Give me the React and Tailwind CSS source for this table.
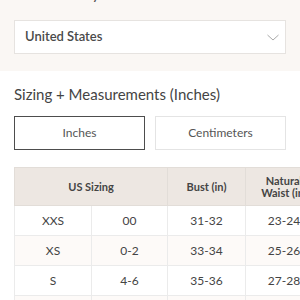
const rows = [
  ['XXS', '00', '31-32', '23-24'],
  ['XS', '0-2', '33-34', '25-26'],
  ['S', '4-6', '35-36', '27-28'],
  ['M', '8-10', '37-38', '29-30'],
];

export default function App() {
  return (
    <div className="w-[300px] h-[300px] overflow-hidden bg-white text-[#444]" style={{ fontFamily: 'Lato, "Open Sans", sans-serif' }}>
      <div className="bg-[#faf7f4] px-[14px] pb-[17px]">
        <p className="-mt-[13px] text-[13px] leading-[16px] font-semibold text-[#555]">Customers Say: Runs a little small</p>
        <div className="mt-[17px] h-[34px] bg-white border border-[#e6e3e0] flex items-center justify-between pl-[10px] pr-[6px]">
          <span className="text-[13px] font-semibold text-[#4a4a4a]">United States</span>
          <svg width="12" height="7" viewBox="0 0 12 7" fill="none" stroke="#a9a9a9" strokeWidth="1">
            <path d="M0.5 1l5.5 5 5.5-5" />
          </svg>
        </div>
      </div>
      <div className="px-[14px]">
        <h2 className="mt-[14px] text-[15px] leading-[18px] text-[#444]">Sizing + Measurements (Inches)</h2>
        <div className="mt-[13px] flex gap-[10px]">
          <button className="flex-1 h-[34px] border border-[#4d4d4d] text-[12px] text-[#555]">Inches</button>
          <button className="flex-1 h-[34px] border border-[#e4e4e4] text-[12px] text-[#555]">Centimeters</button>
        </div>
      </div>
      <div className="mt-[17px] pl-[14px]">
        <table className="w-[400px] table-fixed border-collapse text-[12px] text-[#444] text-center">
          <colgroup>
            <col className="w-[77px]" />
            <col className="w-[76px]" />
            <col className="w-[78px]" />
            <col className="w-[77px]" />
            <col className="w-[92px]" />
          </colgroup>
          <thead>
            <tr className="bg-[#ede7e2] h-[38px]">
              <th colSpan={2} className="border border-[#e2ddd8] font-bold text-[11px] leading-[12px]">US Sizing</th>
              <th className="border border-[#e2ddd8] font-bold text-[11px] leading-[12px]">Bust (in)</th>
              <th className="border border-[#e2ddd8] font-bold text-[11px] leading-[12px] whitespace-nowrap">Natural<br />Waist (in)</th>
              <th className="border border-[#e2ddd8] font-bold text-[11px] leading-[12px]">Hips (in)</th>
            </tr>
          </thead>
          <tbody>
            {rows.map((r, i) => (
              <tr key={r[0]} className={`h-[30px] ${i % 2 === 1 ? 'bg-[#fdfaf8]' : 'bg-white'}`}>
                {r.map((c, j) => (
                  <td key={j} className="border border-[#ebebeb]">{c}</td>
                ))}
                <td className="border border-[#ebebeb]">34-35</td>
              </tr>
            ))}
          </tbody>
        </table>
      </div>
    </div>
  );
}
